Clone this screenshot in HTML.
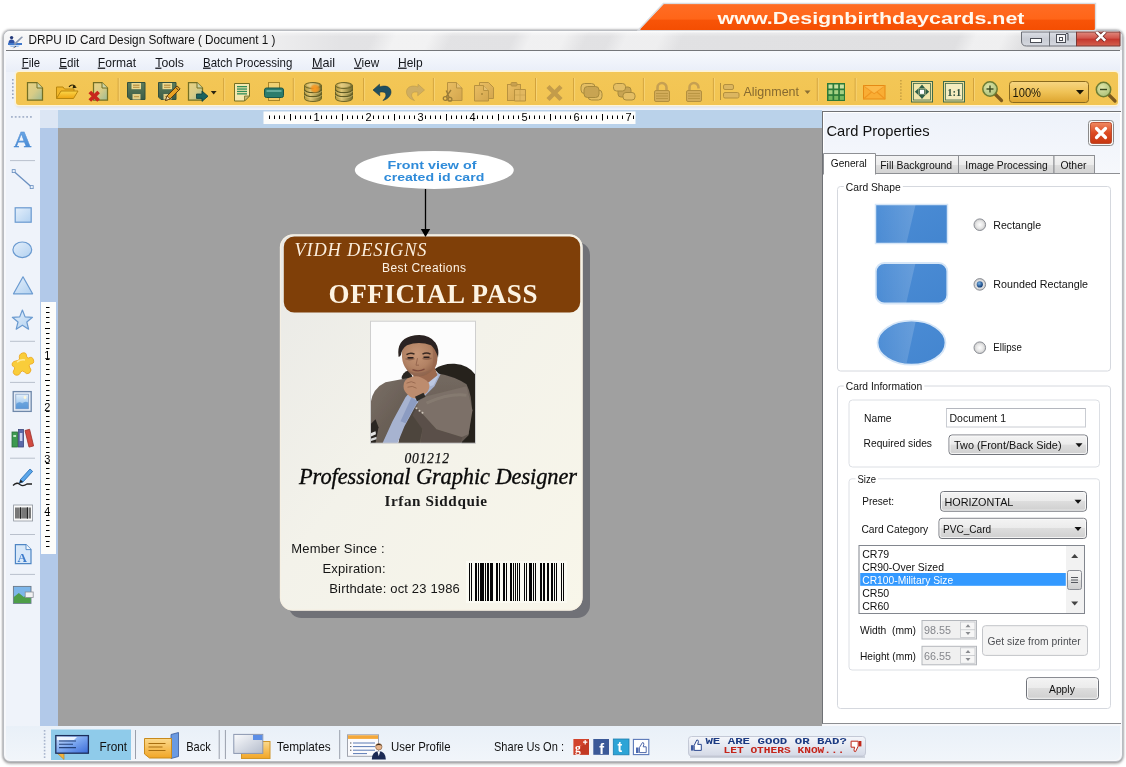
<!DOCTYPE html>
<html><head><meta charset="utf-8"><title>DRPU ID Card Design Software</title>
<style>
*{box-sizing:border-box;margin:0;padding:0}
html,body{width:1126px;height:767px;overflow:hidden;background:#fff;font-family:"Liberation Sans",sans-serif;}
.a{position:absolute}
svg{position:absolute;left:0;top:0;overflow:visible;will-change:transform;transform:translateZ(0)}
text{font-family:"Liberation Sans",sans-serif}
.sf{font-family:"Liberation Serif",serif}
.mf{font-family:"Liberation Mono",monospace}
</style></head>
<body>
<div class="a" style="left:3px;top:30px;width:1120px;height:732px;border:1px solid #b9bcc1;border-radius:7px;background:#f7f8fb;box-shadow:0 0 2px 1px rgba(120,120,125,.45),0 2px 3px rgba(0,0,0,.25)"></div>
<div class="a" style="left:4px;top:31px;width:1118px;height:19px;border-radius:6px 6px 0 0;background:linear-gradient(rgba(255,255,255,.95) 0,rgba(255,255,255,.3) 12%,rgba(255,255,255,0) 30%),linear-gradient(115deg,rgba(255,255,255,0) 0 33%,rgba(255,255,255,.55) 35% 38%,rgba(255,255,255,0) 40% 45.5%,rgba(255,255,255,.5) 47% 50%,rgba(255,255,255,0) 52% 54%,rgba(255,255,255,.45) 55.500% 58.500%,rgba(255,255,255,0) 60.500% 85%,rgba(255,255,255,.5) 86.500% 89%,rgba(255,255,255,0) 91%),linear-gradient(90deg,#f6f6f7 0,#f1f1f2 22%,#e3e3e5 30%,#dfdfe1 100%)"></div>
<div class="a" style="left:6px;top:50px;width:1114px;height:1px;background:#74767a"></div>
<div class="a" style="left:6px;top:51px;width:1114px;height:21px;background:linear-gradient(#f7f9fd,#e9eef8)"></div>
<div class="a" style="left:6px;top:72px;width:1114px;height:39px;background:#eef2fa"></div>
<div class="a" style="left:16px;top:72px;width:1102px;height:32.5px;background:linear-gradient(#f3c757,#f2c451);border-radius:3px;box-shadow:0 0 0 1.5px #fdf3d6,0 2px 2px rgba(200,205,220,.8)"></div>
<div class="a" style="left:6px;top:110px;width:34px;height:616px;background:#eff3fa"></div>
<div class="a" style="left:40px;top:110px;width:782px;height:18px;background:#bad2ea"></div>
<div class="a" style="left:40px;top:110px;width:18px;height:18px;background:#dce6f4"></div>
<div class="a" style="left:40px;top:128px;width:18px;height:598px;background:#b2c9e9"></div>
<div class="a" style="left:58px;top:128px;width:764px;height:598px;background:#a0a0a0"></div>
<div class="a" style="left:6px;top:726px;width:1114px;height:34px;background:linear-gradient(#e9f0f8,#f1f5fa);border-radius:0 0 5px 5px"></div>
<svg width="1126" height="767" viewBox="0 0 1126 767">
<defs><linearGradient id="bn" x1="0" y1="0" x2="0" y2="1"><stop offset="0" stop-color="#ff6c24"/><stop offset=".58" stop-color="#ff6518"/><stop offset=".6" stop-color="#f85408"/><stop offset="1" stop-color="#f44e02"/></linearGradient><linearGradient id="cl" x1="0" y1="0" x2="0" y2="1"><stop offset="0" stop-color="#e08a7e"/><stop offset=".45" stop-color="#d2544a"/><stop offset=".5" stop-color="#c4362c"/><stop offset="1" stop-color="#d4604e"/></linearGradient><linearGradient id="mm" x1="0" y1="0" x2="0" y2="1"><stop offset="0" stop-color="#dcdfe6"/><stop offset=".5" stop-color="#c9ccd4"/><stop offset="1" stop-color="#d6d9e0"/></linearGradient></defs>
<polygon points="663.5,3.5 1095.5,3.5 1095.5,30 638.5,30" fill="url(#bn)" stroke="#d9dde2" stroke-width="1.5"/>
<polygon points="664,4.5 1094.5,4.5 1094.5,30 640,30" fill="url(#bn)"/>
<text x="717.5" y="23.8" font-size="16.6" fill="#fff8ee" font-weight="bold" textLength="307" lengthAdjust="spacingAndGlyphs" >www.Designbirthdaycards.net</text>
<g transform="translate(8,35)"><circle cx="3.600" cy="2.600" r="1.700" fill="#243a7a"/><path d="M.5,8 q0,-3.500 3,-3.500 q3.200,0 3.200,3.500z" fill="#2f52a4"/><path d="M0,8 h14 v2 h-14z" fill="#3f78cc"/><path d="M1,10.500 h11 l-2,1.500 h-7z" fill="#9ec2ee"/><path d="M5.500,9 l8,-7.500 1.600,.6 -8,7.800z" fill="#8a98b0"/><path d="M4.500,13.500 l3,-2.500 .8,.8z" fill="#3a3a44"/></g>
<text x="28.5" y="44" font-size="12.4" fill="#111" font-weight="normal" textLength="247" lengthAdjust="spacingAndGlyphs" >DRPU ID Card Design Software ( Document 1 )</text>
<path d="M1021.5,32 V41 q0,5 5,5 H1049.5 V32z" fill="url(#mm)" stroke="#6e7178" stroke-width="1"/>
<rect x="1049.5" y="32" width="27" height="14" fill="url(#mm)" stroke="#6e7178"/>
<path d="M1076.5,32 H1120 V46 H1076.5z" fill="url(#cl)" stroke="#7a3a36" stroke-width="1"/>
<rect x="1030.5" y="38.5" width="11" height="4" fill="#fff" stroke="#4a4d55" stroke-width="1"/>
<rect x="1056.5" y="34.5" width="9" height="8" fill="#f4f4f6" stroke="#4a4d55"/><rect x="1059.5" y="37.5" width="3" height="3" fill="#fff" stroke="#4a4d55"/><path d="M1066,33.5 h2 v7" fill="none" stroke="#4a4d55"/>
<clipPath id="clx"><rect x="1077" y="31.5" width="43" height="14"/></clipPath><g clip-path="url(#clx)"><path d="M1096.4,31.800 l8.800,8.800 M1105.200,31.800 l-8.800,8.800" stroke="#6a2a26" stroke-width="4" /><path d="M1096.400,31.800 l8.800,8.800 M1105.200,31.800 l-8.800,8.800" stroke="#fff" stroke-width="2.500"/></g>
<text x="21.8" y="66.6" font-size="12.6" fill="#15171c" font-weight="normal" textLength="18.3" lengthAdjust="spacingAndGlyphs" ><tspan text-decoration="underline">F</tspan>ile</text>
<text x="59.2" y="66.6" font-size="12.6" fill="#15171c" font-weight="normal" textLength="20" lengthAdjust="spacingAndGlyphs" ><tspan text-decoration="underline">E</tspan>dit</text>
<text x="97.8" y="66.6" font-size="12.6" fill="#15171c" font-weight="normal" textLength="38.2" lengthAdjust="spacingAndGlyphs" ><tspan text-decoration="underline">F</tspan>ormat</text>
<text x="155.3" y="66.6" font-size="12.6" fill="#15171c" font-weight="normal" textLength="28.6" lengthAdjust="spacingAndGlyphs" ><tspan text-decoration="underline">T</tspan>ools</text>
<text x="203" y="66.6" font-size="12.6" fill="#15171c" font-weight="normal" textLength="89.3" lengthAdjust="spacingAndGlyphs" ><tspan text-decoration="underline">B</tspan>atch Processing</text>
<text x="312" y="66.6" font-size="12.6" fill="#15171c" font-weight="normal" textLength="23.2" lengthAdjust="spacingAndGlyphs" ><tspan text-decoration="underline">M</tspan>ail</text>
<text x="354" y="66.6" font-size="12.6" fill="#15171c" font-weight="normal" textLength="25.2" lengthAdjust="spacingAndGlyphs" ><tspan text-decoration="underline">V</tspan>iew</text>
<text x="398" y="66.6" font-size="12.6" fill="#15171c" font-weight="normal" textLength="24.7" lengthAdjust="spacingAndGlyphs" ><tspan text-decoration="underline">H</tspan>elp</text>
</svg>
<svg width="1126" height="767" viewBox="0 0 1126 767">
<defs>
<linearGradient id="docg" x1="0" y1="0" x2="1" y2="1"><stop offset="0" stop-color="#ead282"/><stop offset=".5" stop-color="#d8cc86"/><stop offset="1" stop-color="#9cba96"/></linearGradient>
<linearGradient id="docf" x1="0" y1="0" x2="1" y2="1"><stop offset="0" stop-color="#e9bd62"/><stop offset="1" stop-color="#d3a64e"/></linearGradient>
<linearGradient id="fold" x1="0" y1="0" x2="0" y2="1"><stop offset="0" stop-color="#fbd648"/><stop offset="1" stop-color="#eda412"/></linearGradient>
<linearGradient id="flop" x1="0" y1="0" x2="0" y2="1"><stop offset="0" stop-color="#5e7c5a"/><stop offset="1" stop-color="#3c5c48"/></linearGradient>
<linearGradient id="dbg" x1="0" y1="0" x2="1" y2="0"><stop offset="0" stop-color="#b09638"/><stop offset=".36" stop-color="#dcc474"/><stop offset="1" stop-color="#746c2c"/></linearGradient>
<linearGradient id="cmb" x1="0" y1="0" x2="0" y2="1"><stop offset="0" stop-color="#f7d683"/><stop offset=".5" stop-color="#efc256"/><stop offset="1" stop-color="#dda42e"/></linearGradient>
<radialGradient id="lens" cx=".4" cy=".35" r=".7"><stop offset="0" stop-color="#dfe5a8"/><stop offset="1" stop-color="#a9bf78"/></radialGradient>
</defs>
<rect x="117.7" y="78" width="1" height="23" fill="#d2a23c"/><rect x="118.7" y="78" width="1" height="23" fill="#f8d880" opacity=".7"/>
<rect x="223.2" y="78" width="1" height="23" fill="#d2a23c"/><rect x="224.2" y="78" width="1" height="23" fill="#f8d880" opacity=".7"/>
<rect x="292.8" y="78" width="1" height="23" fill="#d2a23c"/><rect x="293.8" y="78" width="1" height="23" fill="#f8d880" opacity=".7"/>
<rect x="363.1" y="78" width="1" height="23" fill="#d2a23c"/><rect x="364.1" y="78" width="1" height="23" fill="#f8d880" opacity=".7"/>
<rect x="432.9" y="78" width="1" height="23" fill="#d2a23c"/><rect x="433.9" y="78" width="1" height="23" fill="#f8d880" opacity=".7"/>
<rect x="535.0" y="78" width="1" height="23" fill="#d2a23c"/><rect x="536.0" y="78" width="1" height="23" fill="#f8d880" opacity=".7"/>
<rect x="573.1" y="78" width="1" height="23" fill="#d2a23c"/><rect x="574.1" y="78" width="1" height="23" fill="#f8d880" opacity=".7"/>
<rect x="642.9" y="78" width="1" height="23" fill="#d2a23c"/><rect x="643.9" y="78" width="1" height="23" fill="#f8d880" opacity=".7"/>
<rect x="712.9" y="78" width="1" height="23" fill="#d2a23c"/><rect x="713.9" y="78" width="1" height="23" fill="#f8d880" opacity=".7"/>
<rect x="816.8" y="78" width="1" height="23" fill="#d2a23c"/><rect x="817.8" y="78" width="1" height="23" fill="#f8d880" opacity=".7"/>
<rect x="854.7" y="78" width="1" height="23" fill="#d2a23c"/><rect x="855.7" y="78" width="1" height="23" fill="#f8d880" opacity=".7"/>
<rect x="973.0" y="78" width="1" height="23" fill="#d2a23c"/><rect x="974.0" y="78" width="1" height="23" fill="#f8d880" opacity=".7"/>
<rect x="12" y="79.0" width="1.6" height="1.6" fill="#9aa6c0"/>
<rect x="12" y="82.6" width="1.6" height="1.6" fill="#9aa6c0"/>
<rect x="12" y="86.2" width="1.6" height="1.6" fill="#9aa6c0"/>
<rect x="12" y="89.8" width="1.6" height="1.6" fill="#9aa6c0"/>
<rect x="12" y="93.4" width="1.6" height="1.6" fill="#9aa6c0"/>
<rect x="12" y="97.0" width="1.6" height="1.6" fill="#9aa6c0"/>
<g transform="translate(27,82)"><path d="M.5,.5 h9.5 l5.5,5.5 v12 h-15z" fill="url(#docg)" stroke="#736f24" stroke-width="1.25"/><path d="M10,.5 v5.5 h5.5" fill="#cdd4a6" stroke="#736f24"/></g>
<g transform="translate(56,84)"><path d="M.5,14.5 v-11.5 h6.5 l1.5,2 h9.5 v3" fill="#f1b72a" stroke="#b8860e"/><path d="M.5,14.5 l4.5,-7.5 h17 l-4.5,7.5z" fill="url(#fold)" stroke="#b8860e"/><path d="M13,2.800 q3,-3.400 6.400,-.4" fill="none" stroke="#2a2408" stroke-width="1.200"/><path d="M17.400,.4 l3.400,3.400 -4.200,.4z" fill="#2a2408"/></g>
<g transform="translate(93,82)"><path d="M.5,.5 h8.5 l5.5,5.5 v12 h-14z" fill="url(#docg)" stroke="#736f24" stroke-width="1.25"/><path d="M9,.5 v5.5 h5.5" fill="#cdd4a6" stroke="#736f24"/></g><path d="M89.800,92 l8.800,8.500 M98.600,92 l-8.800,8.500" stroke="#c8261c" stroke-width="3.800"/>
<g transform="translate(127,82)"><path d="M.5,.5 h17.5 v17 h-15 l-2.5,-2.5z" fill="url(#flop)" stroke="#34503c"/><rect x="4.5" y="1" width="9.5" height="6.2" fill="#ecd990"/><rect x="6" y="2.600" width="6.500" height="1.200" fill="#b48a3c"/><rect x="6" y="4.800" width="6.500" height="1" fill="#b48a3c"/><rect x="5.500" y="12" width="8" height="5.500" fill="#e2ce88"/><rect x="7" y="14" width="5" height="1.200" fill="#c09a48"/></g>
<g transform="translate(158,82)"><path d="M.5,.5 h17.5 v17 h-15 l-2.5,-2.5z" fill="url(#flop)" stroke="#34503c"/><rect x="4.5" y="1" width="9.5" height="6.2" fill="#ecd990"/><rect x="6" y="2.600" width="6.500" height="1.200" fill="#b48a3c"/><rect x="6" y="4.800" width="6.500" height="1" fill="#b48a3c"/><rect x="5.500" y="12" width="8" height="5.500" fill="#e2ce88"/><rect x="7" y="14" width="5" height="1.200" fill="#c09a48"/></g>
<g transform="translate(158,82)"><path d="M7.5,18.5 l1.6,-4.6 10,-10 3,3 -10,10z" fill="#eaa224" stroke="#5a3c10" stroke-width="1"/><path d="M7.5,18.5 l1.6,-4.6 3,3z" fill="#f2dcae" stroke="#5a3c10" stroke-width=".8"/><path d="M17.6,5.4 l3,3" stroke="#5a3c10"/></g>
<g transform="translate(188,82)"><path d="M.5,.5 h8.5 l5.5,5.5 v12 h-14z" fill="url(#docg)" stroke="#736f24" stroke-width="1.25"/><path d="M9,.5 v5.5 h5.5" fill="#cdd4a6" stroke="#736f24"/><path d="M8.500,12 h5.500 v-3 l6,5.200 -6,5.200 v-3 h-5.500z" fill="#1b625e" stroke="#0e3c3a" stroke-width=".8"/></g>
<path d="M210.800,91 h5.800 l-2.900,3.400z" fill="#2a2410"/>
<g transform="translate(234,83)"><path d="M.5,.5 h15 v12.5 l-5,5 h-10z" fill="#f4e8ae" stroke="#736f24"/><path d="M15.5,13 h-5 v5z" fill="#c9bb76" stroke="#736f24" stroke-width=".8"/><rect x="3" y="3.0" width="10" height="1.3" fill="#2f8c58"/><rect x="3" y="5.4" width="10" height="1.3" fill="#2f8c58"/><rect x="3" y="7.8" width="10" height="1.3" fill="#2f8c58"/><rect x="3" y="10.2" width="10" height="1.3" fill="#2f8c58"/></g>
<g transform="translate(264,82)"><rect x="4.5" y=".5" width="11" height="7" fill="#f1d174" stroke="#a8862a"/><rect x="4.5" y="12" width="11" height="6.5" fill="#f2c964" stroke="#a8862a"/><rect x=".5" y="6" width="19" height="9.5" rx="2" fill="#2c7c6c" stroke="#1a5648"/><rect x="2.5" y="8" width="15" height="2" fill="#62aa9a"/></g>
<radialGradient id="dbo" cx=".5" cy=".5" r=".5"><stop offset="0" stop-color="#ff9a1c"/><stop offset=".6" stop-color="#f59420" stop-opacity=".8"/><stop offset="1" stop-color="#f0a030" stop-opacity="0"/></radialGradient>
<g transform="translate(304,82)"><path d="M.5,3.5 v13 a8.5,3 0 0 0 17,0 v-13z" fill="url(#dbg)" stroke="#6e6628"/><ellipse cx="9" cy="3.5" rx="8.5" ry="3" fill="url(#dbg)" stroke="#6e6628"/><ellipse cx="9" cy="3.300" rx="6.500" ry="1.800" fill="#ecd48a" opacity=".55"/><path d="M.5,7.6 a8.5,3 0 0 0 17,0" fill="none" stroke="#5e5a24" stroke-width="1.200"/><path d="M.5,8.9 a8.5,3 0 0 0 17,0" fill="none" stroke="#efd98e" stroke-width=".7" opacity=".7"/><path d="M.5,11.6 a8.5,3 0 0 0 17,0" fill="none" stroke="#5e5a24" stroke-width="1.200"/><path d="M.5,12.9 a8.5,3 0 0 0 17,0" fill="none" stroke="#efd98e" stroke-width=".7" opacity=".7"/><ellipse cx="11" cy="6.500" rx="5.500" ry="5" fill="url(#dbo)"/></g>
<g transform="translate(335,82)"><path d="M.5,3.5 v13 a8.5,3 0 0 0 17,0 v-13z" fill="url(#dbg)" stroke="#6e6628"/><ellipse cx="9" cy="3.5" rx="8.5" ry="3" fill="url(#dbg)" stroke="#6e6628"/><ellipse cx="9" cy="3.300" rx="6.500" ry="1.800" fill="#ecd48a" opacity=".55"/><path d="M.5,7.6 a8.5,3 0 0 0 17,0" fill="none" stroke="#5e5a24" stroke-width="1.200"/><path d="M.5,8.9 a8.5,3 0 0 0 17,0" fill="none" stroke="#efd98e" stroke-width=".7" opacity=".7"/><path d="M.5,11.6 a8.5,3 0 0 0 17,0" fill="none" stroke="#5e5a24" stroke-width="1.200"/><path d="M.5,12.9 a8.5,3 0 0 0 17,0" fill="none" stroke="#efd98e" stroke-width=".7" opacity=".7"/></g>
<g transform="translate(373,83)"><path d="M0,7 L6.5,1.2 L6.6,4 C11,2 18,3 18,9 C18,13 14,16.5 10,17.5 C12.5,15 13.6,12.5 12.6,10.6 C11.5,8.800 9,8.800 6.600,9.200 L6.800,12.800 Z" fill="#1f4e60" stroke="#153848" stroke-width=".6"/></g>
<g transform="translate(424.5,83) scale(-1,1)"><path d="M0,7 L6.5,1.2 L6.6,4 C11,2 18,3 18,9 C18,13 14,16.5 10,17.5 C12.5,15 13.6,12.5 12.6,10.6 C11.5,8.800 9,8.800 6.600,9.200 L6.800,12.800 Z" fill="#cfae62" stroke="#bc9a4c" stroke-width=".6"/></g>
<g transform="translate(447,82)"><path d="M.5,.5 h9 l5.5,5.5 v12.5 h-14.5z" fill="url(#docf)" stroke="#b89240"/><path d="M9.5,.5 v5.5 h5.5" fill="#e6c070" stroke="#b89240"/></g><g transform="translate(443,90)" fill="none" stroke="#9a7c38" stroke-width="1.3"><circle cx="2.2" cy="8.5" r="1.9"/><circle cx="7" cy="9.3" r="1.9"/><path d="M3,7 l5,-7 M6.2,7.6 l-3,-7"/></g>
<g transform="translate(474,82)"><path d="M5.5,.5 h9 l5,5 v11 h-14z" fill="url(#docf)" stroke="#b89240"/><path d="M.5,3.5 h9 l5,5 v10.5 h-14z" fill="url(#docf)" stroke="#b89240"/><path d="M9.5,3.5 v5 h5" fill="#e6c070" stroke="#b89240"/><rect x="7" y="11" width="2" height="2" fill="#b89240"/></g>
<g transform="translate(507,82)"><rect x=".5" y="2.5" width="13" height="16" fill="url(#docf)" stroke="#b89240"/><rect x="4" y=".5" width="6" height="3.5" rx="1" fill="#c8a050" stroke="#b89240"/><path d="M7.5,7.5 h11 v11.5 h-11z" fill="#e2b860" stroke="#b89240"/><path d="M7.5,13 h11 M13,7.5 v11.5" stroke="#b89240" stroke-width=".7" opacity=".6"/></g>
<path d="M548,86.5 l13,13 M561,86.5 l-13,13" stroke="#c39c4a" stroke-width="4.4"/>
<g transform="translate(580,83)" stroke="#a88a3c"><rect x="1" y=".5" width="14" height="10" rx="3.5" fill="#e4be64"/><rect x="8" y="7" width="14" height="10" rx="3.5" fill="#e4be64"/><rect x="4" y="3.5" width="15" height="11" rx="3.5" fill="#c8a452"/></g>
<g transform="translate(613,83)" stroke="#a88a3c"><rect x="5" y="4" width="13" height="10" rx="3" fill="#c8a452"/><rect x=".5" y=".5" width="12" height="7.5" rx="3" fill="#e4be64"/><rect x="10" y="9.5" width="12" height="7.5" rx="3" fill="#e4be64"/></g>
<g transform="translate(654,82)"><path d="M3.5,9 v-3.5 a4.5,4.5 0 0 1 9,0 v3.5" fill="none" stroke="#c6a052" stroke-width="2.6"/><rect x=".5" y="8.5" width="15" height="11" rx="1.5" fill="#d2ac5a" stroke="#b4903e"/><path d="M2,11.5 h12 M2,14 h12 M2,16.5 h12" stroke="#b4903e" stroke-width=".8"/></g>
<g transform="translate(686,82)"><path d="M3.5,9 v-3.5 a4.5,4.5 0 0 1 9,0 v1" fill="none" stroke="#c6a052" stroke-width="2.6"/><rect x=".5" y="8.5" width="15" height="11" rx="1.5" fill="#d2ac5a" stroke="#b4903e"/><path d="M2,11.5 h12 M2,14 h12 M2,16.5 h12" stroke="#b4903e" stroke-width=".8"/></g>
<g transform="translate(720,83)" stroke="#b4903e"><path d="M.5,0 v17" fill="none"/><rect x="3.5" y="1.5" width="10" height="5" rx="1.5" fill="#dcb660"/><rect x="3.5" y="9.5" width="15.5" height="5.5" rx="1.5" fill="#dcb660"/></g>
<text x="743.5" y="96" font-size="12.4" textLength="55.5" lengthAdjust="spacingAndGlyphs" fill="#866a30">Alignment</text>
<path d="M804.5,90.5 h6 l-3,3.6z" fill="#8a6e34"/>
<g transform="translate(827,83)"><rect x="0" y="0" width="18" height="18" fill="#2c7a38"/><rect x="1.5" y="1.5" width="4" height="4" fill="#c8e0a0"/><rect x="7.2" y="1.5" width="4" height="4" fill="#c8e0a0"/><rect x="12.9" y="1.5" width="4" height="4" fill="#c8e0a0"/><rect x="1.5" y="7.2" width="4" height="4" fill="#a6d084"/><rect x="7.2" y="7.2" width="4" height="4" fill="#a6d084"/><rect x="12.9" y="7.2" width="4" height="4" fill="#a6d084"/><rect x="1.5" y="12.9" width="4" height="4" fill="#78b860"/><rect x="7.2" y="12.9" width="4" height="4" fill="#78b860"/><rect x="12.9" y="12.9" width="4" height="4" fill="#78b860"/></g>
<g transform="translate(863,85)"><rect x=".5" y=".5" width="21.5" height="13.5" fill="#f9ad34" stroke="#e68a14"/><path d="M.5,.5 l10.75,8 10.75,-8 M.5,14 l8,-7 M22,14 l-8,-7" fill="none" stroke="#ef9620" stroke-width="1.1"/><path d="M1,1 l10.25,7.2 10.25,-7.2z" fill="#fdc458" opacity=".6"/></g>
<rect x="900.3" y="80.0" width="1.2" height="1.4" fill="#b8923c"/>
<rect x="900.3" y="83.1" width="1.2" height="1.4" fill="#b8923c"/>
<rect x="900.3" y="86.2" width="1.2" height="1.4" fill="#b8923c"/>
<rect x="900.3" y="89.3" width="1.2" height="1.4" fill="#b8923c"/>
<rect x="900.3" y="92.4" width="1.2" height="1.4" fill="#b8923c"/>
<rect x="900.3" y="95.5" width="1.2" height="1.4" fill="#b8923c"/>
<rect x="900.3" y="98.6" width="1.2" height="1.4" fill="#b8923c"/>
<g transform="translate(911,81)"><rect x=".5" y=".5" width="21" height="20.5" fill="#eadc98" stroke="#3f6a4a"/><rect x="2.5" y="2.5" width="17" height="16.5" fill="#f0e6ac" stroke="#3f6a4a" stroke-width=".8"/><path d="M11,3.6 l3.4,3.800 h-6.800z M11,17.900 l3.400,-3.800 h-6.800z M3.800,10.750 l3.800,-3.400 v6.800z M18.200,10.750 l-3.800,-3.400 v6.800z" fill="#2d5e48"/><rect x="8.5" y="8.3" width="5" height="5" fill="#fff" stroke="#2d5e48" stroke-width=".8"/></g>
<g transform="translate(943,81)"><rect x=".5" y=".5" width="21" height="20.5" fill="#eadc98" stroke="#3f6a4a"/><rect x="2.5" y="2.5" width="17" height="16.5" fill="#f4ecc0" stroke="#3f6a4a" stroke-width=".8"/><text x="4.2" y="15" font-size="10.5" font-weight="bold" fill="#2d4e3c" class="sf" textLength="14">1:1</text></g>
<path d="M995,94 l6.5,6.5" stroke="#7c5a1e" stroke-width="3.2" stroke-linecap="round"/><circle cx="990" cy="89" r="7.2" fill="url(#lens)" stroke="#6c7c34" stroke-width="1.5"/><path d="M986.5,89 h7" stroke="#3a4a20" stroke-width="1.4"/><path d="M990,85.5 v7" stroke="#3a4a20" stroke-width="1.4"/>
<path d="M1108.5,94.5 l6.5,6.5" stroke="#7c5a1e" stroke-width="3.2" stroke-linecap="round"/><circle cx="1103.5" cy="89.5" r="7.2" fill="url(#lens)" stroke="#6c7c34" stroke-width="1.5"/><path d="M1100.0,89.5 h7" stroke="#3a4a20" stroke-width="1.4"/>
<rect x="1009.5" y="81.5" width="79" height="21" rx="3" fill="url(#cmb)" stroke="#8a6a1e"/>
<text x="1012.5" y="96.8" font-size="12.6" textLength="28.5" lengthAdjust="spacingAndGlyphs" fill="#1a1608">100%</text>
<path d="M1076,90 h8 l-4,4.5z" fill="#1a1608"/>
</svg>
<svg width="1126" height="767" viewBox="0 0 1126 767">
<defs>
<linearGradient id="cardg" x1="0" y1="0" x2="1" y2="1"><stop offset="0" stop-color="#e9e9e6"/><stop offset=".45" stop-color="#f3f2ea"/><stop offset="1" stop-color="#f8f6ea"/></linearGradient>
<filter id="b1" x="-20%" y="-20%" width="140%" height="140%"><feGaussianBlur stdDeviation=".7"/></filter>
<filter id="b2" x="-20%" y="-20%" width="140%" height="140%"><feGaussianBlur stdDeviation=".75"/></filter>
<radialGradient id="fc" cx=".42" cy=".4" r=".65"><stop offset="0" stop-color="#c69676"/><stop offset=".6" stop-color="#b28264"/><stop offset="1" stop-color="#8e6048"/></radialGradient><linearGradient id="su1" x1="0" y1="0" x2="1" y2="1"><stop offset="0" stop-color="#7a6f66"/><stop offset="1" stop-color="#5c5249"/></linearGradient><linearGradient id="su2" x1="0" y1="0" x2="0" y2="1"><stop offset="0" stop-color="#746960"/><stop offset="1" stop-color="#625850"/></linearGradient><clipPath id="phc"><rect x="0" y="0" width="105" height="122"/></clipPath>
</defs>
<rect x="263.5" y="111.5" width="372" height="12.5" fill="#fdfdfb"/>
<text x="313.4" y="120.9" font-size="11" fill="#000" font-weight="normal" >1</text>
<text x="365.4" y="120.9" font-size="11" fill="#000" font-weight="normal" >2</text>
<text x="417.4" y="120.9" font-size="11" fill="#000" font-weight="normal" >3</text>
<text x="469.4" y="120.9" font-size="11" fill="#000" font-weight="normal" >4</text>
<text x="521.4" y="120.9" font-size="11" fill="#000" font-weight="normal" >5</text>
<text x="573.4" y="120.9" font-size="11" fill="#000" font-weight="normal" >6</text>
<text x="625.4" y="120.9" font-size="11" fill="#000" font-weight="normal" >7</text>
<path d="M269.5,115.5 v3.5 M274.5,115.5 v3.5 M279.5,115.5 v3.5 M284.5,115.5 v3.5 M290.5,114 v6.5 M295.5,115.5 v3.5 M300.5,115.5 v3.5 M305.5,115.5 v3.5 M310.5,115.5 v3.5 M321.5,115.5 v3.5 M326.5,115.5 v3.5 M331.5,115.5 v3.5 M336.5,115.5 v3.5 M342.5,114 v6.5 M347.5,115.5 v3.5 M352.5,115.5 v3.5 M357.5,115.5 v3.5 M362.5,115.5 v3.5 M373.5,115.5 v3.5 M378.5,115.5 v3.5 M383.5,115.5 v3.5 M388.5,115.5 v3.5 M394.5,114 v6.5 M399.5,115.5 v3.5 M404.5,115.5 v3.5 M409.5,115.5 v3.5 M414.5,115.5 v3.5 M425.5,115.5 v3.5 M430.5,115.5 v3.5 M435.5,115.5 v3.5 M440.5,115.5 v3.5 M446.5,114 v6.5 M451.5,115.5 v3.5 M456.5,115.5 v3.5 M461.5,115.5 v3.5 M466.5,115.5 v3.5 M477.5,115.5 v3.5 M482.5,115.5 v3.5 M487.5,115.5 v3.5 M492.5,115.5 v3.5 M498.5,114 v6.5 M503.5,115.5 v3.5 M508.5,115.5 v3.5 M513.5,115.5 v3.5 M518.5,115.5 v3.5 M529.5,115.5 v3.5 M534.5,115.5 v3.5 M539.5,115.5 v3.5 M544.5,115.5 v3.5 M550.5,114 v6.5 M555.5,115.5 v3.5 M560.5,115.5 v3.5 M565.5,115.5 v3.5 M570.5,115.5 v3.5 M581.5,115.5 v3.5 M586.5,115.5 v3.5 M591.5,115.5 v3.5 M596.5,115.5 v3.5 M602.5,114 v6.5 M607.5,115.5 v3.5 M612.5,115.5 v3.5 M617.5,115.5 v3.5 M622.5,115.5 v3.5 M633.5,115.5 v3.5" stroke="#000" stroke-width="1"/>
<rect x="41" y="302" width="15" height="252" fill="#fdfdfb"/>
<text x="44.3" y="358.5" font-size="11" fill="#000" font-weight="normal" >1</text>
<text x="44.3" y="410.5" font-size="11" fill="#000" font-weight="normal" >2</text>
<text x="44.3" y="462.5" font-size="11" fill="#000" font-weight="normal" >3</text>
<text x="44.3" y="514.5" font-size="11" fill="#000" font-weight="normal" >4</text>
<path d="M46,307.5 h3.5 M46,312.5 h3.5 M46,317.5 h3.5 M46,322.5 h3.5 M45,328.5 h5 M46,333.5 h3.5 M46,338.5 h3.5 M46,343.5 h3.5 M46,348.5 h3.5 M46,359.5 h3.5 M46,364.5 h3.5 M46,369.5 h3.5 M46,374.5 h3.5 M45,380.5 h5 M46,385.5 h3.5 M46,390.5 h3.5 M46,395.5 h3.5 M46,400.5 h3.5 M46,411.5 h3.5 M46,416.5 h3.5 M46,421.5 h3.5 M46,426.5 h3.5 M45,432.5 h5 M46,437.5 h3.5 M46,442.5 h3.5 M46,447.5 h3.5 M46,452.5 h3.5 M46,463.5 h3.5 M46,468.5 h3.5 M46,473.5 h3.5 M46,478.5 h3.5 M45,484.5 h5 M46,489.5 h3.5 M46,494.5 h3.5 M46,499.5 h3.5 M46,504.5 h3.5 M46,515.5 h3.5 M46,520.5 h3.5 M46,525.5 h3.5 M46,530.5 h3.5 M45,536.5 h5 M46,541.5 h3.5 M46,546.5 h3.5" stroke="#000" stroke-width="1"/>
<ellipse cx="434.3" cy="170" rx="79.5" ry="19" fill="#fff"/>
<text x="387.6" y="168.7" font-size="11.8" fill="#2f8bd9" font-weight="bold" textLength="88.8" lengthAdjust="spacingAndGlyphs">Front view of</text>
<text x="383.8" y="180.9" font-size="11.8" fill="#2f8bd9" font-weight="bold" textLength="100.5" lengthAdjust="spacingAndGlyphs">created id card</text>
<rect x="288.5" y="242" width="301.5" height="376" rx="13" fill="#707177" filter="url(#b1)"/>
<rect x="280" y="234.5" width="302.5" height="376" rx="13" fill="url(#cardg)"/>
<rect x="280.4" y="234.9" width="301.7" height="375.2" rx="12.6" fill="none" stroke="#f6efe2" stroke-width="1.2" opacity=".9"/>
<path d="M283.8,247 a10.5,10.5 0 0 1 10.5,-10.5 h275.4 a10.5,10.5 0 0 1 10.5,10.5 v55 a10.5,10.5 0 0 1 -10.5,10.5 h-275.4 a10.5,10.5 0 0 1 -10.5,-10.5z" fill="#7f3f08"/>
<text x="294.5" y="255.6" font-size="18.4" fill="#fbeedd" font-weight="normal" textLength="132" class="sf" font-style="italic">VIDH DESIGNS</text>
<text x="382" y="272.2" font-size="12" fill="#fdf3e6" font-weight="normal" textLength="84" >Best Creations</text>
<text x="328.5" y="303.3" font-size="27" fill="#fdf3e2" font-weight="bold" textLength="209" class="sf" >OFFICIAL PASS</text>
<g transform="translate(370.5,321.2)"><rect x="0" y="0" width="105" height="122" fill="#fcfcfc"/><g clip-path="url(#phc)">
<g filter="url(#b2)">
<path d="M64,48 q8,-6 20,-5.5 q14,1 21,11 v70 h-14 l-6,-50 -14,-18z" fill="#27231f"/>
<path d="M31,57 q1,-6 7,-8 l4,6 -6,6z" fill="#2c2723"/>
<path d="M0,82 q2,-15 15,-21 l24,-4.500 8,18 -14,24 -14,23.500 h-19z" fill="url(#su1)"/>
<path d="M0,103 l5,-5 3,8 -3,16 h-5z" fill="#2a2622"/><path d="M0,112 l5,-2 .5,3 -5.500,2.500z" fill="#e4e4e4"/><path d="M0,117.500 l6,-2 v2.500 l-6,2z" fill="#d8d8d8"/>
<path d="M66,52 q18,3 30,11 q6,12 5,27 l-3,24 -8,8 h-62 l4,-20 16,-26 14,-12z" fill="url(#su2)"/>
<path d="M28,122 l3,-18 12,-18 12,8 -6,28z" fill="#4e453e"/>
<path d="M58,49 l12,4 -6,12 -18,18 -12,22 -7,17 h-15 l10,-22 13,-24 12,-14z" fill="#a7b3d0"/>
<path d="M60,52 l8,2 -5,10 -8,2z" fill="#bcc8e2"/>
<path d="M41,76 l6,4 -12,22 -5,-2z" fill="#8c9cc2"/>
<path d="M48,79 l8,-4 40,-10 6,24 -4,24 -10,4 -28,-10 -14,-18z" fill="#7b7067"/>
<path d="M46,86 l20,22 26,8 -2,6 h-40 l2,-14 -10,-14z" fill="#5a5048"/>
<path d="M56,82 q22,-10 40,-8" stroke="#8a7f75" stroke-width="3" fill="none" opacity=".7"/>
<circle cx="46" cy="87" r="1" fill="#cfc6bb"/><circle cx="49" cy="89.5" r="1" fill="#cfc6bb"/><circle cx="52" cy="91.5" r="1" fill="#cfc6bb"/>
<path d="M42,46 h22 l3,8 -10,8 -14,-6z" fill="#9c6a50"/>
<path d="M31.5,36 q-1,-12 6,-16 q12,-5 24,0 q6,5 5.5,16 q0,8 -5,13 q-6,6 -13,6 q-8,0 -13,-7 q-4,-5 -4.500,-12z" fill="url(#fc)"/>
<path d="M62,24 q5,6 4.500,15 q0,7 -5,11 q2,-10 .5,-26z" fill="#9a6a50" opacity=".7"/>
<path d="M28,35 q-2,-16 12,-20 q17,-4 25,6.500 q4,6 2.500,15 q-2.500,-9 -7,-12.500 q-12,-4.500 -24,0 q-5,3 -6,9.500 q-1,2.500 -2.500,2z" fill="#2c2420"/>
<path d="M36,33.500 q4,-2.500 8,-.5 M52,33 q4,-2.500 8,0" stroke="#3a2a22" stroke-width="1.500" fill="none"/><path d="M37,36.600 h6 M53,36.200 h6" stroke="#2a1e1a" stroke-width="1.700"/><path d="M35,46 q3,8 12,9.500 q9,-.5 14,-8 q-2,3 -14,4 q-8,0 -12,-5.500z" fill="#8c6450" opacity=".55"/><path d="M35,37.500 q4,2 9,0 M52,37.200 q4,2 9,-.2" stroke="#8a5e48" stroke-width="1.400" fill="none" opacity=".8"/><path d="M47,37 l-1.500,7 h3" stroke="#96664e" stroke-width="1" fill="none"/><path d="M42,48.500 q6,2.500 12,-.5" stroke="#7c4a3c" stroke-width="1.300" fill="none"/>
<path d="M33,65 q0,-7 7,-9 q6,-2 10,0 q8,3 9,8 q0,6 -5,9 l-6,4 q-6,1 -10,-3 q-5,-4 -5,-9z" fill="#bd8c6e"/>
<path d="M36,62 q5,-3 9,0 M37,66 q5,-2 9,1" stroke="#96684e" stroke-width=".9" fill="none"/>
<path d="M44.500,75.500 l8.500,-4 2,4 -8.500,4.500z" fill="#2e2925"/>
</g></g><rect x="0" y="0" width="105" height="122" fill="none" stroke="#cfcfcf" stroke-width="1"/></g>
<path d="M425.5,189 V231" stroke="#000" stroke-width="1.3"/><path d="M420.8,229 h9.4 l-4.7,8z" fill="#000"/>
<text x="404.5" y="462.8" font-size="13.6" fill="#111" font-weight="normal" textLength="44.5" class="sf" font-style="italic" stroke="#111" stroke-width=".25">001212</text>
<text x="299" y="484.2" font-size="22.4" fill="#0a0a0a" font-weight="normal" textLength="278" class="sf" font-style="italic" stroke="#0a0a0a" stroke-width=".35">Professional Graphic Designer</text>
<text x="384.5" y="506" font-size="15.2" fill="#1a1a1a" font-weight="bold" textLength="102.5" class="sf" >Irfan Siddquie</text>
<text x="291.2" y="553.2" font-size="13" fill="#151515" font-weight="normal" textLength="93.5" >Member Since :</text>
<text x="322.5" y="573" font-size="13" fill="#151515" font-weight="normal" textLength="63" >Expiration:</text>
<text x="329.3" y="593" font-size="13" fill="#151515" font-weight="normal" textLength="130.5" >Birthdate: oct 23 1986</text>
<rect x="466" y="561" width="101" height="42" fill="#fafaf2"/>
<path d="M469.00,563 h1.00 v38 h-1.00z M471.00,563 h1.00 v38 h-1.00z M475.00,563 h2.00 v38 h-2.00z M478.00,563 h1.00 v38 h-1.00z M480.00,563 h4.00 v38 h-4.00z M485.00,563 h1.00 v38 h-1.00z M487.00,563 h2.00 v38 h-2.00z M490.00,563 h3.00 v38 h-3.00z M496.00,563 h2.00 v38 h-2.00z M499.00,563 h1.00 v38 h-1.00z M503.00,563 h2.00 v38 h-2.00z M506.00,563 h1.00 v38 h-1.00z M510.00,563 h2.00 v38 h-2.00z M513.00,563 h1.00 v38 h-1.00z M515.00,563 h1.00 v38 h-1.00z M517.00,563 h1.00 v38 h-1.00z M519.00,563 h1.00 v38 h-1.00z M524.00,563 h1.00 v38 h-1.00z M526.00,563 h1.00 v38 h-1.00z M529.00,563 h3.00 v38 h-3.00z M533.00,563 h1.00 v38 h-1.00z M535.00,563 h1.00 v38 h-1.00z M540.00,563 h2.00 v38 h-2.00z M543.00,563 h2.00 v38 h-2.00z M547.00,563 h2.00 v38 h-2.00z M551.00,563 h2.00 v38 h-2.00z M554.00,563 h1.00 v38 h-1.00z M556.00,563 h1.00 v38 h-1.00z M561.00,563 h1.00 v38 h-1.00z M563.00,563 h1.00 v38 h-1.00z " fill="#050505"/>
</svg>
<div class="a" style="left:822px;top:111px;width:299px;height:613px;background:#fff;border-left:1.5px solid #6f7175;border-top:1.5px solid #6f7175;border-bottom:1px solid #8c8e92"></div>
<div class="a" style="left:824px;top:113px;width:296px;height:61px;background:linear-gradient(#eef2fa,#f6f8fc)"></div>
<svg width="1126" height="767" viewBox="0 0 1126 767">
<defs>
<linearGradient id="xb" x1="0" y1="0" x2="0" y2="1"><stop offset="0" stop-color="#f08a62"/><stop offset=".5" stop-color="#dc4a22"/><stop offset="1" stop-color="#c63610"/></linearGradient>
<linearGradient id="tabg" x1="0" y1="0" x2="0" y2="1"><stop offset="0" stop-color="#f4f4f4"/><stop offset=".5" stop-color="#ececec"/><stop offset=".5" stop-color="#dedede"/><stop offset="1" stop-color="#d2d2d2"/></linearGradient>
<linearGradient id="btn" x1="0" y1="0" x2="0" y2="1"><stop offset="0" stop-color="#f4f4f4"/><stop offset=".48" stop-color="#ebebeb"/><stop offset=".5" stop-color="#dddddd"/><stop offset="1" stop-color="#cfcfcf"/></linearGradient>
<linearGradient id="shp" x1="0" y1="0" x2="1" y2="1"><stop offset="0" stop-color="#4c8dd6"/><stop offset="1" stop-color="#4385cf"/></linearGradient>
<radialGradient id="rad" cx=".5" cy=".5" r=".5"><stop offset="0" stop-color="#fdfdfd"/><stop offset=".6" stop-color="#e6e6e6"/><stop offset="1" stop-color="#c8c8c8"/></radialGradient>
<radialGradient id="radon" cx=".4" cy=".35" r=".6"><stop offset="0" stop-color="#7ab4e8"/><stop offset="1" stop-color="#14407a"/></radialGradient>
</defs>
<text x="826.5" y="135.8" font-size="15" fill="#111" font-weight="normal" textLength="103" lengthAdjust="spacingAndGlyphs" >Card Properties</text>
<rect x="1088.5" y="120.5" width="25" height="25" rx="3" fill="#f8f8f8" stroke="#8a8a8a"/><rect x="1090.5" y="122.5" width="21" height="21" rx="2" fill="url(#xb)" stroke="#b03a1a" stroke-width=".8"/>
<path d="M1096.5,128.5 l9,9 M1105.5,128.5 l-9,9" stroke="#fff" stroke-width="3.2" stroke-linecap="round"/>
<path d="M824,173.5 H1120" stroke="#8e9094" stroke-width="1"/>
<rect x="875.5" y="155.5" width="83.0" height="18" fill="url(#tabg)" stroke="#8e9094"/>
<rect x="958.5" y="155.5" width="95.5" height="18" fill="url(#tabg)" stroke="#8e9094"/>
<rect x="1054" y="155.5" width="40.5" height="18" fill="url(#tabg)" stroke="#8e9094"/>
<path d="M823.5,174.5 V153.5 H875.5 V174.5" fill="#fff" stroke="#8e9094"/>
<rect x="824" y="173" width="51" height="2" fill="#fff"/>
<text x="830.8" y="167" font-size="11.4" fill="#111" font-weight="normal" textLength="36" lengthAdjust="spacingAndGlyphs" >General</text>
<text x="880.2" y="169.2" font-size="11.4" fill="#111" font-weight="normal" textLength="72" lengthAdjust="spacingAndGlyphs" >Fill Background</text>
<text x="965.3" y="169.2" font-size="11.4" fill="#111" font-weight="normal" textLength="82.5" lengthAdjust="spacingAndGlyphs" >Image Processing</text>
<text x="1060.4" y="169.2" font-size="11.4" fill="#111" font-weight="normal" textLength="26" lengthAdjust="spacingAndGlyphs" >Other</text>
<rect x="837.5" y="186.5" width="273.0" height="184.5" rx="3" fill="none" stroke="#d5d8de"/><rect x="843.8" y="183.5" width="59" height="6" fill="#fff"/><text x="845.8" y="190.6" font-size="11.4" fill="#111" font-weight="normal" textLength="55" lengthAdjust="spacingAndGlyphs" >Card Shape</text>
<linearGradient id="shn" x1="0" y1="0" x2="1" y2="0"><stop offset="0" stop-color="#fff" stop-opacity=".02"/><stop offset="1" stop-color="#fff" stop-opacity=".17"/></linearGradient>
<rect x="875.5" y="204.5" width="72" height="39" fill="url(#shp)" stroke="#d6e6f7" stroke-width="1.5"/>
<path d="M876.5,243 v-38 h39 l-9,38z" fill="url(#shn)"/>
<rect x="875.8" y="263" width="71.5" height="40.5" rx="8.5" fill="url(#shp)" stroke="#d6e6f7" stroke-width="1.8"/>
<clipPath id="c2"><rect x="876.5" y="263.700" width="70" height="39" rx="8"/></clipPath><path clip-path="url(#c2)" d="M876,304 v-41 h39.500 l-9.500,41z" fill="url(#shn)"/>
<ellipse cx="911.5" cy="342.7" rx="34" ry="22" fill="url(#shp)" stroke="#d6e6f7" stroke-width="1.8"/>
<clipPath id="c3"><ellipse cx="911.5" cy="342.7" rx="33" ry="21"/></clipPath><path clip-path="url(#c3)" d="M876,366 v-46 h40 l-10,46z" fill="url(#shn)"/>
<circle cx="979.8" cy="224.7" r="5.8" fill="url(#rad)" stroke="#8a8d94" stroke-width="1"/>
<circle cx="979.8" cy="284.4" r="5.8" fill="url(#rad)" stroke="#8a8d94" stroke-width="1"/>
<circle cx="979.8" cy="284.4" r="3.1" fill="url(#radon)"/>
<circle cx="979.8" cy="347.7" r="5.8" fill="url(#rad)" stroke="#8a8d94" stroke-width="1"/>
<text x="993.3" y="229" font-size="11.4" fill="#111" font-weight="normal" textLength="47.8" lengthAdjust="spacingAndGlyphs" >Rectangle</text>
<text x="993.3" y="288.3" font-size="11.4" fill="#111" font-weight="normal" textLength="94.8" lengthAdjust="spacingAndGlyphs" >Rounded Rectangle</text>
<text x="993.3" y="351.4" font-size="11.4" fill="#111" font-weight="normal" textLength="28.5" lengthAdjust="spacingAndGlyphs" >Ellipse</text>
<rect x="837.5" y="386" width="273.0" height="322.5" rx="3" fill="none" stroke="#d5d8de"/><rect x="843.8" y="383" width="80.5" height="6" fill="#fff"/><text x="845.8" y="390" font-size="11.4" fill="#111" font-weight="normal" textLength="76.5" lengthAdjust="spacingAndGlyphs" >Card Information</text>
<rect x="849" y="400" width="250.5" height="67" rx="3.5" fill="none" stroke="#dcdfe4"/>
<text x="864" y="421.8" font-size="11.4" fill="#111" font-weight="normal" textLength="27.5" lengthAdjust="spacingAndGlyphs" >Name</text>
<rect x="946.5" y="408.5" width="139" height="18.5" fill="#fff" stroke="#c9ccd2"/><path d="M946.5,408.5 h139" stroke="#b4b7be"/>
<text x="949.5" y="421.8" font-size="11.4" fill="#111" font-weight="normal" textLength="56.5" lengthAdjust="spacingAndGlyphs" >Document 1</text>
<text x="863.5" y="446.5" font-size="11.4" fill="#111" font-weight="normal" textLength="68.5" lengthAdjust="spacingAndGlyphs" >Required sides</text>
<rect x="949" y="435" width="138.5" height="19.5" rx="3" fill="url(#btn)" stroke="#72757c"/><rect x="950" y="436" width="136.5" height="17.5" rx="2" fill="none" stroke="#fbfbfb" opacity=".8"/><text x="954" y="448.6" font-size="11.6" fill="#111" font-weight="normal" textLength="107.5" lengthAdjust="spacingAndGlyphs" >Two (Front/Back Side)</text><path d="M1075.5,443.25 h7 l-3.5,4z" fill="#111"/>
<rect x="849" y="478.8" width="250.5" height="191.2" rx="3" fill="none" stroke="#dcdfe4"/><rect x="855.5" y="475.8" width="22.5" height="6" fill="#fff"/><text x="857.5" y="482.8" font-size="11.4" fill="#111" font-weight="normal" textLength="18.5" lengthAdjust="spacingAndGlyphs" >Size</text>
<text x="862.2" y="505" font-size="11.4" fill="#111" font-weight="normal" textLength="31.8" lengthAdjust="spacingAndGlyphs" >Preset:</text>
<rect x="940.5" y="491.5" width="146.0" height="19.69999999999999" rx="3" fill="url(#btn)" stroke="#72757c"/><rect x="941.5" y="492.5" width="144.0" height="17.69999999999999" rx="2" fill="none" stroke="#fbfbfb" opacity=".8"/><text x="944.4" y="506" font-size="11.6" fill="#111" font-weight="normal" textLength="69" lengthAdjust="spacingAndGlyphs" >HORIZONTAL</text><path d="M1074.5,499.85 h7 l-3.5,4z" fill="#111"/>
<text x="861.4" y="533.3" font-size="11.4" fill="#111" font-weight="normal" textLength="66.8" lengthAdjust="spacingAndGlyphs" >Card Category</text>
<rect x="939" y="518.3" width="147.5" height="20.200000000000045" rx="3" fill="url(#btn)" stroke="#72757c"/><rect x="940" y="519.3" width="145.5" height="18.200000000000045" rx="2" fill="none" stroke="#fbfbfb" opacity=".8"/><text x="943" y="532.7" font-size="11.6" fill="#111" font-weight="normal" textLength="48.2" lengthAdjust="spacingAndGlyphs" >PVC_Card</text><path d="M1074.5,526.9 h7 l-3.5,4z" fill="#111"/>
<rect x="859" y="545.5" width="225.5" height="68" fill="#fff" stroke="#82868e"/>
<rect x="860.2" y="573" width="205.6" height="12.8" fill="#3399ff"/>
<text x="862.2" y="558" font-size="11.4" fill="#111" font-weight="normal" textLength="27" lengthAdjust="spacingAndGlyphs" >CR79</text>
<text x="862.2" y="571.2" font-size="11.4" fill="#111" font-weight="normal" textLength="81.8" lengthAdjust="spacingAndGlyphs" >CR90-Over Sized</text>
<text x="862.2" y="584" font-size="11.4" fill="#fff" font-weight="normal" textLength="91" lengthAdjust="spacingAndGlyphs" >CR100-Military Size</text>
<text x="862.2" y="596.8" font-size="11.4" fill="#111" font-weight="normal" textLength="27" lengthAdjust="spacingAndGlyphs" >CR50</text>
<text x="862.2" y="610" font-size="11.4" fill="#111" font-weight="normal" textLength="27" lengthAdjust="spacingAndGlyphs" >CR60</text>
<rect x="1066" y="546" width="18" height="67" fill="#f2f2f2"/>
<path d="M1071.2,558 h7 l-3.5,-4z" fill="#444"/><path d="M1071.2,601.5 h7 l-3.5,4z" fill="#444"/>
<rect x="1067.5" y="570.5" width="14" height="19" rx="2" fill="url(#btn)" stroke="#8a8d94"/>
<path d="M1071,577.5 h7 M1071,580 h7 M1071,582.5 h7" stroke="#55585e" stroke-width="1"/>
<text x="860" y="633.6" font-size="11.4" fill="#111" font-weight="normal" textLength="56" lengthAdjust="spacingAndGlyphs" >Width&#160;&#160;(mm)</text>
<text x="860" y="659.9" font-size="11.4" fill="#111" font-weight="normal" textLength="56" lengthAdjust="spacingAndGlyphs" >Height (mm)</text>
<rect x="922" y="620.5" width="54.5" height="18.5" fill="#f0f0f0" stroke="#b4b7bc"/>
<rect x="960.5" y="622.0" width="14.5" height="15.5" fill="#f6f6f6" stroke="#c4c6ca" stroke-width=".8"/><path d="M960.5,629.7 h14.5" stroke="#c4c6ca" stroke-width=".8"/>
<path d="M965.5,627.3 h5 l-2.5,-3z M965.5,632.1 h5 l-2.5,3z" fill="#8a8c90"/>
<text x="924" y="633.7" font-size="11.4" fill="#85878c" font-weight="normal" textLength="27" lengthAdjust="spacingAndGlyphs" >98.55</text>
<rect x="922" y="646.3" width="54.5" height="18.5" fill="#f0f0f0" stroke="#b4b7bc"/>
<rect x="960.5" y="647.8" width="14.5" height="15.5" fill="#f6f6f6" stroke="#c4c6ca" stroke-width=".8"/><path d="M960.5,655.5 h14.5" stroke="#c4c6ca" stroke-width=".8"/>
<path d="M965.5,653.0999999999999 h5 l-2.5,-3z M965.5,657.9 h5 l-2.5,3z" fill="#8a8c90"/>
<text x="924" y="659.5" font-size="11.4" fill="#85878c" font-weight="normal" textLength="27" lengthAdjust="spacingAndGlyphs" >66.55</text>
<rect x="982.5" y="625.7" width="105" height="29.7" rx="3" fill="#f4f4f4" stroke="#c3c5c9"/>
<text x="987.6" y="644.6" font-size="11.4" fill="#4c4e52" font-weight="normal" textLength="93" lengthAdjust="spacingAndGlyphs" >Get size from printer</text>
<rect x="1026.5" y="677.7" width="72" height="21.6" rx="3" fill="url(#btn)" stroke="#70737a"/><rect x="1027.5" y="678.7" width="70" height="19.6" rx="2" fill="none" stroke="#fcfcfc" opacity=".9"/>
<text x="1049" y="692.7" font-size="11.6" fill="#111" font-weight="normal" textLength="25.8" lengthAdjust="spacingAndGlyphs" >Apply</text>
</svg>
<svg width="1126" height="767" viewBox="0 0 1126 767">
<defs>
<linearGradient id="tbl" x1="0" y1="0" x2="1" y2="1"><stop offset="0" stop-color="#e4effb"/><stop offset="1" stop-color="#b2d1f0"/></linearGradient>
<linearGradient id="tbA" x1="0" y1="0" x2="0" y2="1"><stop offset="0" stop-color="#78b0ea"/><stop offset="1" stop-color="#3d82d0"/></linearGradient>
</defs>
<rect x="11.0" y="116" width="1.8" height="1.8" fill="#a7b4cc"/>
<rect x="14.8" y="116" width="1.8" height="1.8" fill="#a7b4cc"/>
<rect x="18.6" y="116" width="1.8" height="1.8" fill="#a7b4cc"/>
<rect x="22.4" y="116" width="1.8" height="1.8" fill="#a7b4cc"/>
<rect x="26.2" y="116" width="1.8" height="1.8" fill="#a7b4cc"/>
<rect x="30.0" y="116" width="1.8" height="1.8" fill="#a7b4cc"/>
<rect x="10" y="160.1" width="25" height="1" fill="#b9c0cc"/>
<rect x="10" y="340.8" width="25" height="1" fill="#b9c0cc"/>
<rect x="10" y="381.9" width="25" height="1" fill="#b9c0cc"/>
<rect x="10" y="457.7" width="25" height="1" fill="#b9c0cc"/>
<rect x="10" y="534.0" width="25" height="1" fill="#b9c0cc"/>
<rect x="10" y="573.9" width="25" height="1" fill="#b9c0cc"/>
<text x="13.8" y="146.8" font-size="24" font-weight="bold" class="sf" fill="url(#tbA)" stroke="#4a88d0" stroke-width=".3" textLength="17.6" lengthAdjust="spacingAndGlyphs">A</text>
<path d="M14,171.5 L31.5,187" stroke="#6a8fc0" stroke-width="1.3"/><rect x="12.2" y="169.6" width="3" height="3" fill="#e8f0fa" stroke="#6a8fc0" stroke-width=".8"/><rect x="30.2" y="185.6" width="3" height="3" fill="#e8f0fa" stroke="#6a8fc0" stroke-width=".8"/>
<rect x="15.2" y="207.8" width="16" height="14.4" fill="url(#tbl)" stroke="#6a9ad0" stroke-width="1.2"/>
<ellipse cx="22.3" cy="249.8" rx="9.4" ry="7.8" fill="url(#tbl)" stroke="#6a9ad0" stroke-width="1.2"/>
<path d="M23,276.8 L32.6,293.8 H13.5z" fill="url(#tbl)" stroke="#6a9ad0" stroke-width="1.2" stroke-linejoin="round"/>
<polygon points="22.4,310.0 25.1,316.9 32.5,317.3 26.8,322.0 28.6,329.2 22.4,325.2 16.2,329.2 18.0,322.0 12.3,317.3 19.7,316.9" fill="url(#tbl)" stroke="#6a9ad0" stroke-width="1.2" stroke-linejoin="round"/>
<path d="M12.5,366 q-1.5,-4 3,-5 q3,0 4,-2 q-1,-5 3,-6 q4,-1 4,3 q0,2 2,2 q4,-2 5,2 q1,4 -3,4 q-2,1 -1,3 q3,3 0,6 q-3,2 -5,-1 q-2,-2 -4,0 q-1,4 -5,3 q-4,-2 -1,-6 q1,-2 -2,-3z" fill="#f9cd3a" stroke="#eca820" stroke-width=".9"/><path d="M17,362 q4,-3 8,-2" stroke="#fdea9a" stroke-width="1.6" fill="none"/>
<linearGradient id="pic" x1="0" y1="0" x2="0" y2="1"><stop offset="0" stop-color="#e6f1fb"/><stop offset=".5" stop-color="#b4d4f2"/><stop offset="1" stop-color="#4e90d6"/></linearGradient><rect x="13.2" y="391.6" width="18" height="19.8" fill="#e6edf6" stroke="#6f88aa" stroke-width="1.3"/><rect x="15.8" y="394.2" width="12.8" height="14.6" fill="url(#pic)" stroke="#7f9cc4" stroke-width=".7"/><path d="M16.200,404 q3,-3 6,-.5 q3,-3 6,-1 v6 h-12z" fill="#5c9ad8" opacity=".8"/><circle cx="25" cy="397.500" r="1.400" fill="#fff7d8"/>
<rect x="12" y="432" width="5.5" height="15" fill="#3d9a50" stroke="#2a6e38" stroke-width=".8"/><rect x="18.5" y="429.5" width="5" height="17.5" fill="#5a68a8" stroke="#3c487c" stroke-width=".8"/><path d="M25,430.5 l4.6,-1.2 4,16.6 -4.6,1.2z" fill="#d24a40" stroke="#9a2e28" stroke-width=".8"/><rect x="13.3" y="435" width="2.8" height="2" fill="#bfe6c4"/><rect x="19.8" y="433" width="2.6" height="8" fill="#c8d0f0"/>
<path d="M20.5,479.5 l9.5,-10.5 2.6,2.4 -9.5,10.5 -3.6,1.2z" fill="#5aa6ea" stroke="#2e72b8" stroke-width=".9"/><path d="M20.5,479.5 l-1,3.6 3.6,-1.2z" fill="#222"/><path d="M13,485.5 q4,-4 7,-1 q3,2.4 7,-.5 h5" fill="none" stroke="#222" stroke-width="1.3"/>
<rect x="13.6" y="505" width="19" height="16" fill="#fafafa" stroke="#8e949e" stroke-width=".8"/><path d="M16,507.5 v11 M18,507.5 v11 M20.5,507.5 v11 M23,507.5 v11 M25,507.5 v11 M27.4,507.5 v11 M30,507.5 v11" stroke="#222" stroke-width="1.2"/><path d="M20.5,507.5 v11 M27.4,507.5 v11" stroke="#222" stroke-width="1.9"/>
<path d="M15.4,544.6 h10.6 l5,5 v14 h-15.6z" fill="#d8e8f9" stroke="#4f86c4" stroke-width="1.2"/><path d="M26,544.6 v5 h5" fill="#f2f7fd" stroke="#4f86c4" stroke-width=".9"/><text x="17.4" y="561.5" font-size="13" font-weight="bold" class="sf" fill="#3d7ccc">A</text>
<rect x="13.4" y="586.4" width="17.6" height="17" fill="#7db6ea" stroke="#6a7888" stroke-width=".9"/><path d="M13.8,603 v-6 l5,-4 5,4 3,-2 4,3 v5z" fill="#4e9e48"/><rect x="25.2" y="592" width="8" height="5.4" fill="#f2f2f2" stroke="#8a8f98" stroke-width=".8"/>
</svg>
<svg width="1126" height="767" viewBox="0 0 1126 767">
<defs>
<linearGradient id="sbl" x1="0" y1="0" x2="1" y2="1"><stop offset="0" stop-color="#cfe0fb"/><stop offset=".5" stop-color="#7aa6f0"/><stop offset="1" stop-color="#3a6ad8"/></linearGradient>
<linearGradient id="sor" x1="0" y1="0" x2="0" y2="1"><stop offset="0" stop-color="#fbd98c"/><stop offset="1" stop-color="#f1a526"/></linearGradient>
<linearGradient id="sgr" x1="0" y1="0" x2="1" y2="1"><stop offset="0" stop-color="#fafbfd"/><stop offset="1" stop-color="#b4bccc"/></linearGradient>
<linearGradient id="wbg" x1="0" y1="0" x2="0" y2="1"><stop offset="0" stop-color="#f4f6fb"/><stop offset="1" stop-color="#d4d9e6"/></linearGradient>
</defs>
<rect x="43.8" y="730.0" width="1.6" height="1.6" fill="#a7b4cc"/>
<rect x="43.8" y="733.3" width="1.6" height="1.6" fill="#a7b4cc"/>
<rect x="43.8" y="736.6" width="1.6" height="1.6" fill="#a7b4cc"/>
<rect x="43.8" y="739.9" width="1.6" height="1.6" fill="#a7b4cc"/>
<rect x="43.8" y="743.2" width="1.6" height="1.6" fill="#a7b4cc"/>
<rect x="43.8" y="746.5" width="1.6" height="1.6" fill="#a7b4cc"/>
<rect x="43.8" y="749.8" width="1.6" height="1.6" fill="#a7b4cc"/>
<rect x="43.8" y="753.1" width="1.6" height="1.6" fill="#a7b4cc"/>
<rect x="43.8" y="756.4" width="1.6" height="1.6" fill="#a7b4cc"/>
<rect x="51" y="729.5" width="80" height="30.5" fill="#8fcbea"/>
<path d="M56,752 h8 v7.5z" fill="#f2b23c" stroke="#b8862a" stroke-width=".7"/>
<rect x="55.8" y="735.6" width="32.6" height="17.6" fill="url(#sbl)" stroke="#1c2e5a" stroke-width="1.3"/>
<path d="M59,741 h17 M59,744.3 h14 M59,747.6 h17" stroke="#24427a" stroke-width="1.1"/><path d="M57,737 h20 l-3,3 h-17z" fill="#f4f8ff" opacity=".9"/>
<text x="99.6" y="751" font-size="13" fill="#111" font-weight="normal" textLength="27.5" lengthAdjust="spacingAndGlyphs" >Front</text>
<rect x="135.0" y="730" width="1" height="29" fill="#9aa0ac"/>
<rect x="218.7" y="730" width="1" height="29" fill="#9aa0ac"/>
<rect x="224.9" y="730" width="1" height="29" fill="#9aa0ac"/>
<rect x="339.2" y="730" width="1" height="29" fill="#9aa0ac"/>
<path d="M171,734.5 l7.5,-2 v24 l-7.5,2z" fill="#6a9ae2" stroke="#3a5a9a" stroke-width=".8"/>
<path d="M144.5,738.5 h27 v19.5 h-22 l-5,-4z" fill="url(#sor)" stroke="#c88a1c" stroke-width="1"/>
<path d="M148.5,743.5 h17 M148.5,747 h14 M148.5,750.5 h17" stroke="#a86e10" stroke-width="1"/>
<text x="186.2" y="751" font-size="13" fill="#111" font-weight="normal" textLength="24.6" lengthAdjust="spacingAndGlyphs" >Back</text>
<rect x="241.5" y="741.5" width="28.5" height="17" fill="url(#sor)" stroke="#d0962a" stroke-width="1"/>
<rect x="233.8" y="734.4" width="29" height="19" fill="url(#sgr)" stroke="#8a96b0" stroke-width="1"/><rect x="253" y="735" width="9.4" height="5" fill="#5c8ee6"/>
<text x="276.8" y="751.2" font-size="13" fill="#111" font-weight="normal" textLength="53.8" lengthAdjust="spacingAndGlyphs" >Templates</text>
<rect x="347.5" y="734.8" width="31" height="21.5" fill="#fbfbfd" stroke="#a0a4ae" stroke-width="1"/><rect x="348" y="735.3" width="30" height="3.6" fill="#f4a83a"/>
<path d="M353,743 h22 M353,746.6 h22 M353,750.2 h22 M353,753.6 h14" stroke="#5a7ab4" stroke-width="1"/><path d="M350,743 h1.4 M350,746.6 h1.4 M350,750.2 h1.4" stroke="#555" stroke-width="1"/>
<circle cx="378.8" cy="746.8" r="3.2" fill="#e6b48c" stroke="#7a5230" stroke-width=".6"/><path d="M375.6,745.8 q3,-4 6.4,0 q-3,-1.6 -6.4,0z" fill="#3a2a1a"/><path d="M371.8,759.5 q0,-8 7,-8.6 q7,.6 7,8.6z" fill="#1c2a54"/><path d="M377.4,751.2 l1.4,5 1.4,-5z" fill="#fff"/>
<text x="391" y="751.2" font-size="13" fill="#111" font-weight="normal" textLength="59.5" lengthAdjust="spacingAndGlyphs" >User Profile</text>
<text x="494" y="750.8" font-size="13" fill="#111" font-weight="normal" textLength="70" lengthAdjust="spacingAndGlyphs" >Share Us On :</text>
<rect x="573.4" y="739" width="15.6" height="15.8" fill="#d2432c"/><path d="M573.4,754.8 l15.6,-15.8 v15.8z" fill="#b8341f" opacity=".6"/>
<text x="575" y="751.5" font-size="11.5" font-weight="bold" fill="#fff" class="sf">g</text><path d="M583,742.2 h4.4 M585.2,740 v4.4" stroke="#fff" stroke-width="1.2"/>
<rect x="593.3" y="739" width="15.7" height="15.8" fill="#3b5998"/><text x="599.2" y="754.4" font-size="14.5" font-weight="bold" fill="#fff">f</text>
<rect x="613.3" y="739" width="15.7" height="15.8" fill="#2da4d6" stroke="#1c7eb0" stroke-width=".8"/><text x="617.6" y="752.4" font-size="14" font-weight="bold" fill="#fff">t</text>
<rect x="633.4" y="739.4" width="15.4" height="15.2" fill="#fff" stroke="#5a78b8" stroke-width="1.1"/><path d="M636,753 v-5.5 h2.6 v5.5z" fill="#4a68b0"/><path d="M639.4,747.6 l3,-5 q1.6,-.4 1.4,1.8 l-.6,2.4 h3 v5.8 h-6.8z" fill="#fff" stroke="#3c58a0" stroke-width=".9"/>
<rect x="688.5" y="736.5" width="177" height="19.5" rx="3" fill="url(#wbg)" stroke="#c4c9d6" stroke-width="1"/><path d="M690,757 h175" stroke="#a9afbf" stroke-width="1.2"/>
<path d="M691,750.6 v-5.4 h2.6 v5.4z" fill="#3c58a0"/><path d="M694.2,745.4 l2.6,-5.4 q1.8,-.4 1.6,1.8 l-.7,2.6 h3.6 v6 h-7.1z" fill="#fff" stroke="#2c4890" stroke-width="1"/>
<path d="M861.4,741 v5.4 h-2.6 v-5.4z" fill="#c0281a"/><path d="M858.2,746.2 l-2.6,5.4 q-1.8,.4 -1.6,-1.8 l.7,-2.6 h-3.6 v-6 h7.1z" fill="#fff" stroke="#c0281a" stroke-width="1"/>
<text x="705.4" y="743.8" font-size="9.6" fill="#1b3a82" font-weight="bold" textLength="141.5" lengthAdjust="spacingAndGlyphs" class="mf" >WE ARE GOOD OR BAD?</text>
<text x="723.5" y="752.6" font-size="9.6" fill="#c4241a" font-weight="bold" textLength="121" lengthAdjust="spacingAndGlyphs" class="mf" >LET OTHERS KNOW...</text>
</svg>
</body></html>
